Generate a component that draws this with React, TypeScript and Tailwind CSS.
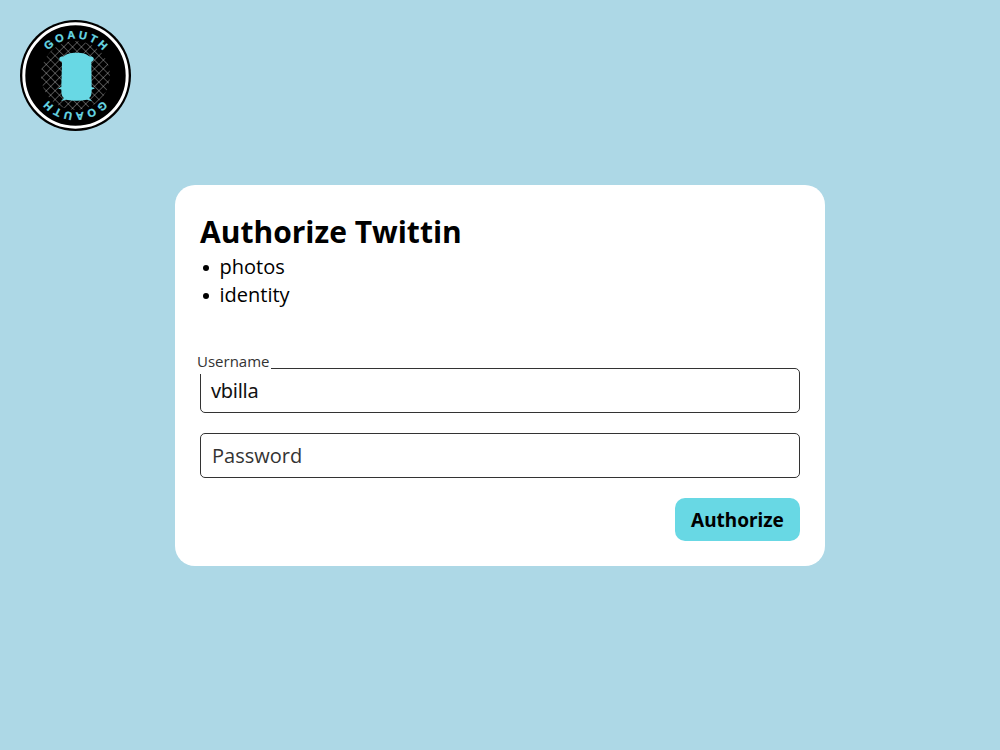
import React from "react";

const Logo = () => (
  <svg width="111" height="111" viewBox="0 0 111 111" className="block">
    <defs>
      <pattern id="mesh" width="6.2" height="6.2" patternUnits="userSpaceOnUse" patternTransform="rotate(45)">
        <path d="M0 0H6.2M0 0V6.2" stroke="#d0d0d0" strokeWidth="0.7" fill="none" />
      </pattern>
      <path id="topArc" d="M 18.5 55.5 A 37 37 0 0 1 92.5 55.5" />
    </defs>
    <circle cx="55.5" cy="55.5" r="55.5" fill="#000" />
    <circle cx="55.5" cy="55.5" r="51.700" fill="none" stroke="#fff" strokeWidth="3" />
    <circle cx="55.5" cy="55.5" r="34.500" fill="url(#mesh)" />
    <text fill="#68d8e4" stroke="#68d8e4" strokeWidth="0.3" fontFamily="'Liberation Sans', sans-serif" fontWeight="700" fontSize="11" letterSpacing="2.8">
      <textPath href="#topArc" startOffset="51.200%" textAnchor="middle">GOAUTH</textPath>
    </text>
    <g transform="rotate(180 55.5 55.5)">
      <text fill="#68d8e4" stroke="#68d8e4" strokeWidth="0.3" fontFamily="'Liberation Sans', sans-serif" fontWeight="700" fontSize="11" letterSpacing="2.8">
        <textPath href="#topArc" startOffset="51.200%" textAnchor="middle">GOAUTH</textPath>
      </text>
    </g>
    <path
      d="M42 42C40 41 39 40 39.300 38.500C39.600 36.800 41.500 36.300 43.500 36.500C46 34 50 32.700 56.500 32.700C63 32.700 67 34 69.500 36.500C71.500 36.300 73.400 36.800 73.700 38.500C74 40 73 41 71.300 42L71.700 67L75 68.500L71.700 69.500L71.500 73C71.400 75.500 70.500 77 69 78L72 81L67 79.800C60 81 53 81 46 79.800L41 81L44 78C42.500 77 41.600 75.500 41.500 73L41.300 69.500L38 68.500L41.300 67L42 42Z"
      fill="#68d8e4"
    />
  </svg>
);

export default function App() {
  return (
    <div className="bg-[#add8e6] h-screen w-full flex flex-col font-['Open_Sans',sans-serif] text-black">
      <div className="pl-5 pt-5 h-[185px] shrink-0">
        <Logo />
      </div>
      <div className="bg-white rounded-[20px] w-[650px] h-[381px] mx-auto p-[25px]">
        <h1 className="text-[30px] leading-[44px] font-bold">Authorize Twittin</h1>
        <ul className="text-[20px] leading-[28px] mt-[-1px]">
          <li className="flex items-center">
            <span className="w-[6px] h-[6px] rounded-full bg-black ml-[3px] mr-[10.500px] mt-px" />
            photos
          </li>
          <li className="flex items-center">
            <span className="w-[6px] h-[6px] rounded-full bg-black ml-[3px] mr-[10.500px] mt-px" />
            identity
          </li>
        </ul>
        <div className="relative mt-[59px] h-[45px] border border-[#333] rounded-[5px] flex items-center pl-[10px]">
          <label className="absolute left-[-5px] top-[-18px] h-[23px] bg-white pl-[1px] pr-[2px] text-[15px] leading-[20px] text-[#333]">
            Username
          </label>
          <span className="text-[20px] font-['Noto_Sans',sans-serif] text-[#111] tracking-[-0.3px]">vbilla</span>
        </div>
        <div className="mt-5 h-[45px] border border-[#333] rounded-[5px] flex items-center pl-[11px]">
          <span className="text-[20px] text-[#333]">Password</span>
        </div>
        <div className="mt-5 flex justify-end">
          <button className="w-[125px] h-[43px] pt-[2px] rounded-[10px] bg-[#68d8e4] text-[19px] font-bold font-['Noto_Sans',sans-serif] text-black">
            Authorize
          </button>
        </div>
      </div>
    </div>
  );
}
